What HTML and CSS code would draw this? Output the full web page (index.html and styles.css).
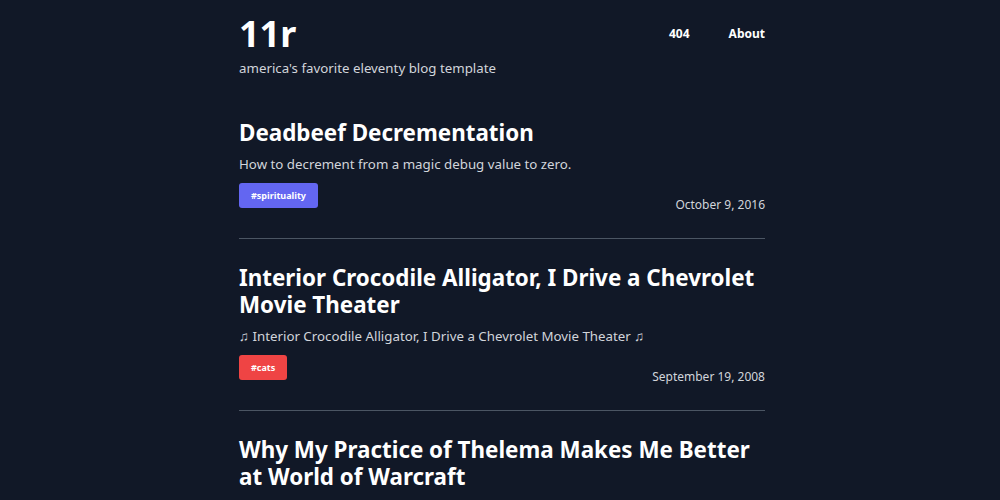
FILE: index.html
```html
<!DOCTYPE html>
<html lang="en">
<head>
<meta charset="utf-8">
<title>11r</title>
<link rel="stylesheet" href="styles.css">
</head>
<body>
<div class="wrap">
  <header class="header">
    <div class="brand">
      <a class="logo" href="#">11r</a>
      <p class="tagline">america's favorite eleventy blog template</p>
    </div>
    <nav class="nav">
      <a href="#">404</a>
      <a href="#">About</a>
    </nav>
  </header>
  <main>
    <article class="post">
      <h2 class="title">Deadbeef Decrementation</h2>
      <p class="desc">How to decrement from a magic debug value to zero.</p>
      <div class="meta">
        <a class="tag tag-purple" href="#">#spirituality</a>
        <time class="date">October 9, 2016</time>
      </div>
    </article>
    <article class="post">
      <h2 class="title">Interior Crocodile Alligator, I Drive a Chevrolet Movie Theater</h2>
      <p class="desc">♫ Interior Crocodile Alligator, I Drive a Chevrolet Movie Theater ♫</p>
      <div class="meta">
        <a class="tag tag-red" href="#">#cats</a>
        <time class="date">September 19, 2008</time>
      </div>
    </article>
    <article class="post last">
      <h2 class="title">Why My Practice of Thelema Makes Me Better at World of Warcraft</h2>
    </article>
  </main>
</div>
</body>
</html>
```
FILE: styles.css
```css
html, body {
  margin: 0;
  background: #111827;
}
body {
  font-family: "Noto Sans", "Open Sans", sans-serif;
  color: #d1d5db;
}
a { color: inherit; text-decoration: none; }
.wrap {
  width: 526px;
  margin: 0 auto;
  padding: 10px 0 0 4px;
}
.header {
  display: flex;
  justify-content: space-between;
  align-items: flex-start;
}
.logo {
  display: block;
  font-size: 36px;
  font-weight: 700;
  line-height: 48px;
  color: #ffffff;
}
.tagline {
  margin: 0;
  font-size: 13.3px;
  line-height: 20px;
  color: #d1d5db;
}
.nav {
  display: flex;
  gap: 39px;
  padding-top: 15px;
}
.nav a {
  font-size: 12px;
  font-weight: 700;
  color: #ffffff;
  line-height: 18px;
}
.post {
  padding: 25px 0 30px;
  border-bottom: 1px solid #4b5563;
}
.post:first-child { padding-top: 41px; }
.post.last { border-bottom: 0; padding-bottom: 0; }
.title {
  margin: 0;
  font-size: 22.4px;
  line-height: 27px;
  font-weight: 700;
  color: #ffffff;
}
.desc {
  margin: 8px 0 0;
  font-size: 13.3px;
  line-height: 20px;
  color: #d1d5db;
}
.meta {
  display: flex;
  justify-content: space-between;
  align-items: flex-end;
  margin-top: 9px;
}
.tag {
  display: inline-block;
  padding: 0 12px;
  height: 25px;
  line-height: 25px;
  border-radius: 3px;
  font-size: 9px;
  font-weight: 700;
  color: #ffffff;
}
.tag-purple { background: #6366f1; }
.tag-red { background: #ef4444; }
.date {
  font-size: 12px;
  line-height: 18px;
  color: #d1d5db;
  margin-bottom: -6px;
}
```
